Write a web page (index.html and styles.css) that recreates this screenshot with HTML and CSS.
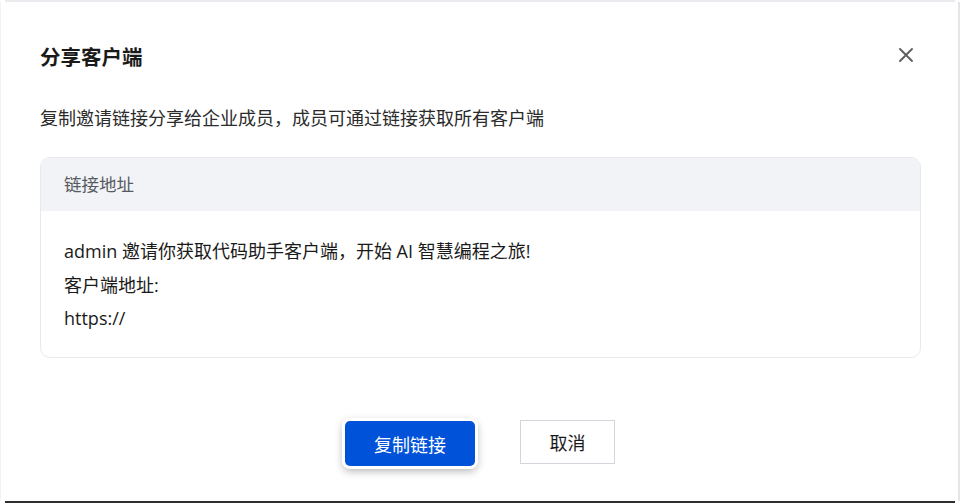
FILE: index.html
```html
<!DOCTYPE html>
<html lang="zh-CN">
<head>
<meta charset="utf-8">
<title>分享客户端</title>
<link rel="stylesheet" href="styles.css">
</head>
<body>
<div class="topline"></div>
<div class="modal">
  <div class="header">
    <h1 class="title">分享客户端</h1>
    <button class="close" aria-label="关闭">
      <svg width="16" height="16" viewBox="0 0 16 16"><path d="M2 2L14 14M14 2L2 14" stroke="#5f5f5f" stroke-width="1.9" stroke-linecap="round" fill="none"/></svg>
    </button>
  </div>
  <p class="desc">复制邀请链接分享给企业成员，成员可通过链接获取所有客户端</p>
  <div class="box">
    <div class="box-head">链接地址</div>
    <div class="box-body">
      <div>admin 邀请你获取代码助手客户端，开始 AI 智慧编程之旅!</div>
      <div>客户端地址:</div>
      <div>https://</div>
    </div>
  </div>
  <div class="actions">
    <button class="btn primary">复制链接</button>
    <button class="btn ghost">取消</button>
  </div>
</div>
<div class="bottomline"></div>
</body>
</html>
```

FILE: styles.css
```css
html, body {
  margin: 0;
  padding: 0;
  background: #ffffff;
}
body {
  width: 960px;
  height: 503px;
  overflow: hidden;
  font-family: "Open Sans", "Noto Sans CJK SC", sans-serif;
  color: #1f1f1f;
}
.topline {
  height: 2px;
  margin: 0 5px;
  background: #e9ebef;
}
.modal {
  box-sizing: border-box;
  height: 499px;
  width: 960px;
  border-left: 1px solid #f1f2f4;
  border-right: 2px solid #e4e5e8;
  padding: 41px 37px 0 39px;
}
.header {
  display: flex;
  align-items: center;
  justify-content: space-between;
  height: 28px;
}
.title {
  margin: 0;
  font-size: 20.5px;
  font-weight: 700;
  line-height: 28px;
  color: #1a1a1a;
}
.close {
  border: 0;
  background: none;
  padding: 0;
  width: 16px;
  height: 16px;
  margin-right: 7px;
  margin-top: -4px;
  display: flex;
}
.desc {
  margin: 33px 0 0;
  font-size: 18px;
  line-height: 28px;
  color: #2b2b2b;
}
.box {
  margin-top: 25px;
  border: 1px solid #e8e9ec;
  border-radius: 10px;
  overflow: hidden;
}
.box-head {
  height: 53px;
  line-height: 53px;
  background: #f2f3f7;
  padding-left: 23px;
  font-size: 17.5px;
  color: #555a60;
}
.box-body {
  padding: 24px 23px 21px;
  font-size: 18px;
  line-height: 33.5px;
  color: #1a1a1a;
}
.actions {
  margin-top: 61px;
  height: 47px;
  display: flex;
  align-items: center;
  justify-content: center;
  gap: 45px;
  padding-right: 1px;
}
.btn {
  font-family: "Open Sans", "Noto Sans CJK SC", sans-serif;
  font-size: 18px;
  padding: 0;
  cursor: pointer;
}
.primary {
  width: 130px;
  height: 45px;
  margin-top: 3px;
  border: 0;
  border-radius: 5px;
  background: #0052d9;
  color: #ffffff;
  box-shadow: 0 0 0 3px #ffffff, 0 3px 8px 2px rgba(0, 0, 0, 0.3);
}
.ghost {
  width: 95px;
  height: 44px;
  border: 1px solid #d3d5dc;
  border-radius: 0;
  background: #ffffff;
  color: #1a1a1a;
}
.bottomline {
  height: 2px;
  margin: 0 5px;
  background: #2e2e2e;
}
```
